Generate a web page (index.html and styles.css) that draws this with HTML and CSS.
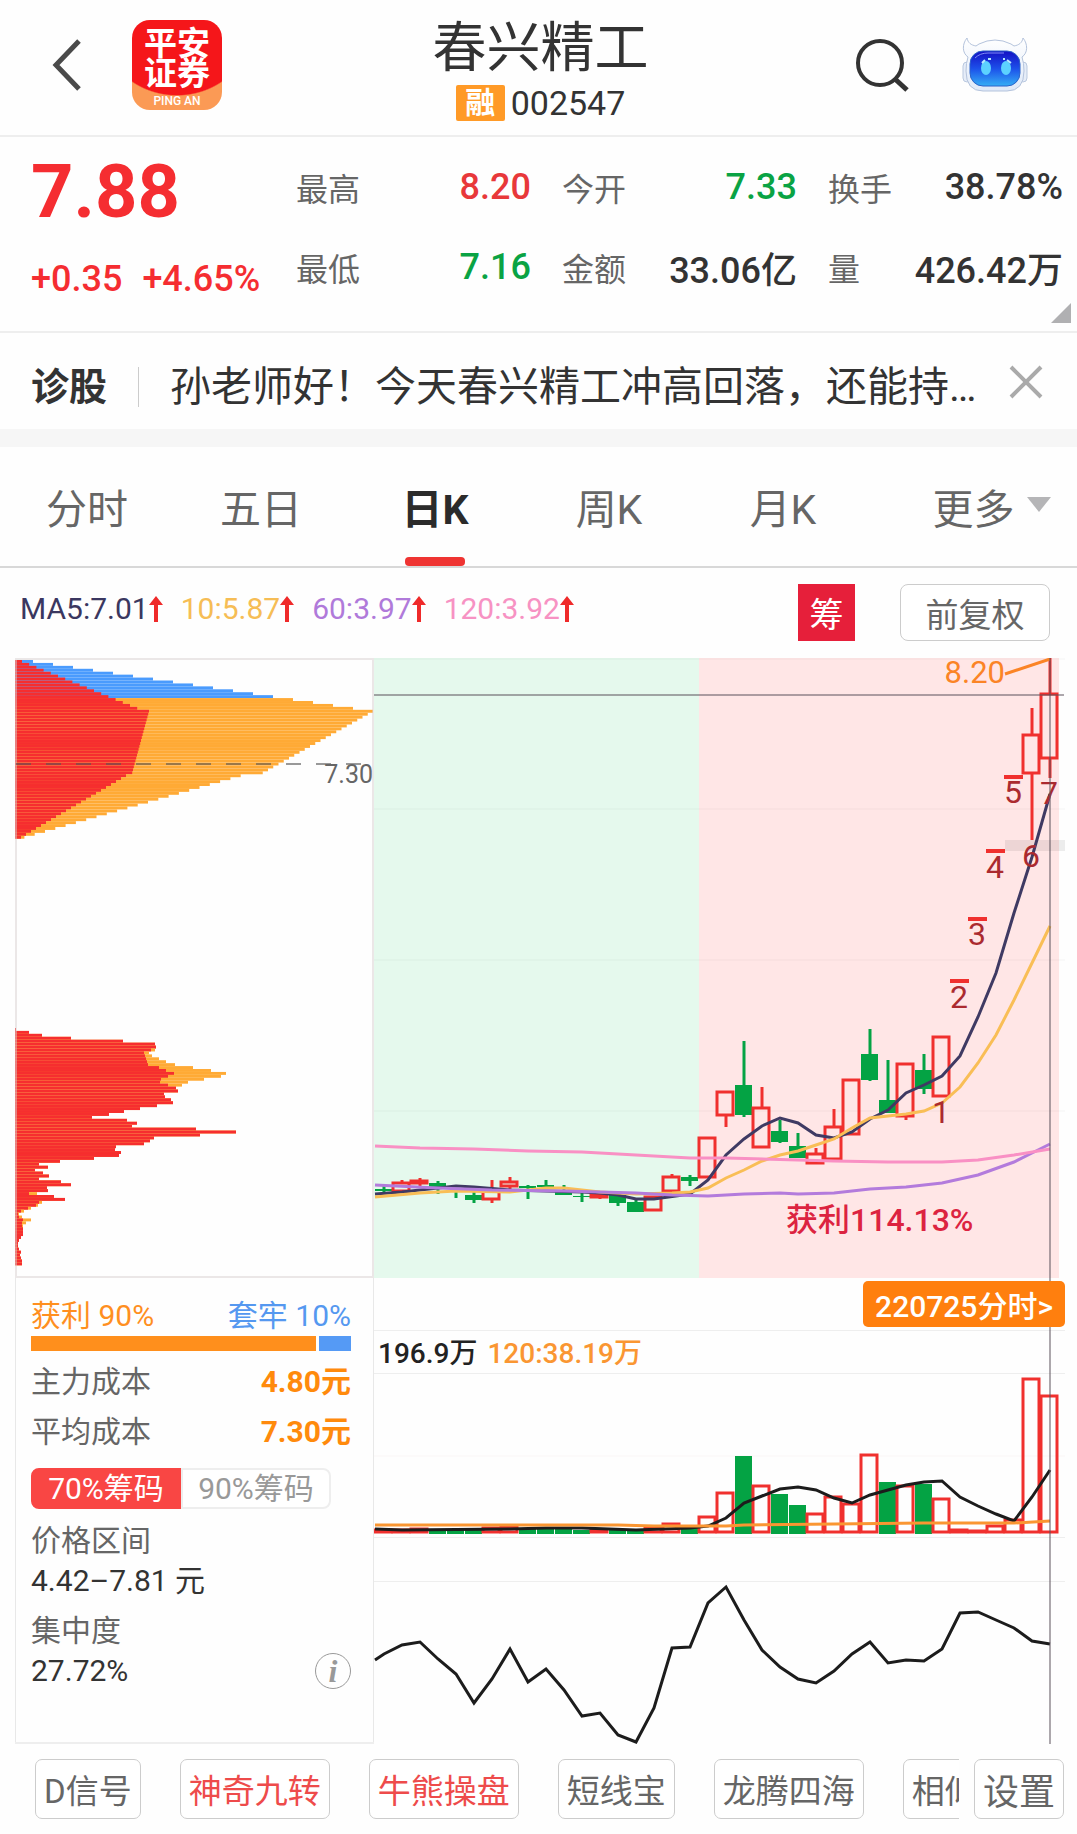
FILE: index.html
```html
<!DOCTYPE html>
<html lang="zh-CN">
<head>
  <meta charset="UTF-8">
  <meta name="viewport" content="width=device-width, initial-scale=1.0">
  <title>春兴精工 002547</title>
  <link rel="stylesheet" href="styles.css">
</head>
<body>
  <header class="header">
    <div class="header-left">
      <button class="icon-btn" type="button" aria-label="返回">
        <svg width="30" height="54" viewBox="0 0 30 54"><path d="M27 3 L4 27 L27 51" fill="none" stroke="#4a4a4a" stroke-width="5"/></svg>
      </button>
      <div class="logo">
        <span class="logo-name">平安<br>证券</span>
        <span class="logo-en">PING AN</span>
      </div>
    </div>
    <div class="header-title">
      <h1>春兴精工</h1>
      <p class="code"><span class="badge">融</span>002547</p>
    </div>
    <div class="header-right">
      <button class="icon-btn" type="button" aria-label="搜索">
        <svg width="54" height="54" viewBox="0 0 54 54"><g fill="none" stroke="#333" stroke-width="4"><circle cx="25" cy="25" r="22"/><path d="M40 41 L52 52" stroke-width="5"/></g></svg>
      </button>
      <button class="icon-btn" type="button" aria-label="智能助手">
        <svg width="68" height="56" viewBox="0 0 68 56">
          <defs>
            <linearGradient id="screen" x1="0" y1="0" x2="0" y2="1">
              <stop offset="0" stop-color="#1410c4"/>
              <stop offset="0.5" stop-color="#1c50ea"/>
              <stop offset="1" stop-color="#35aef5"/>
            </linearGradient>
            <linearGradient id="shell" x1="0" y1="0" x2="0" y2="1">
              <stop offset="0" stop-color="#ffffff"/>
              <stop offset="1" stop-color="#dfe9f8"/>
            </linearGradient>
          </defs>
          <rect x="2" y="25" width="8" height="20" rx="4" fill="#e6edf8" stroke="#b9c8df"/>
          <rect x="58" y="25" width="8" height="20" rx="4" fill="#e6edf8" stroke="#b9c8df"/>
          <path d="M6 1 C1 7 1 16 7 20 Q5 26 5 34 Q5 54 22 54 L46 54 Q63 54 63 34 Q63 26 61 20 C67 16 67 7 62 1 C61 6 58 8 53 9 L50 7 Q34 -1 18 7 L15 9 C10 8 7 6 6 1 Z" fill="url(#shell)" stroke="#b4c3dc"/>
          <rect x="9" y="14" width="50" height="35" rx="13" fill="url(#screen)" stroke="#2b63c9"/>
          <path d="M14 21 Q19 16 27 16 L43 16" fill="none" stroke="#7e8df5" stroke-width="1"/>
          <ellipse cx="25" cy="31" rx="5" ry="7" fill="#5cd2ff"/>
          <ellipse cx="45" cy="31" rx="5" ry="7" fill="#5cd2ff"/>
          <path d="M21 26 L24 23 M27 22 L30 22 M42 22 L44 22 M46 23 L50 26" stroke="#b8ecff" stroke-width="2"/>
        </svg>
      </button>
    </div>
  </header>

  <section class="quote">
    <div class="quote-main">
      <div class="price">7.88</div>
      <div class="change"><span>+0.35</span><span>+4.65%</span></div>
    </div>
    <dl class="quote-grid">
      <div><dt>最高</dt><dd class="up">8.20</dd></div>
      <div><dt>今开</dt><dd class="down">7.33</dd></div>
      <div><dt>换手</dt><dd>38.78%</dd></div>
      <div><dt>最低</dt><dd class="down">7.16</dd></div>
      <div><dt>金额</dt><dd>33.06亿</dd></div>
      <div><dt>量</dt><dd>426.42万</dd></div>
    </dl>
    <span class="corner"></span>
  </section>

  <section class="tip">
    <strong>诊股</strong>
    <a href="#" class="tip-text">孙老师好！今天春兴精工冲高回落，还能持…</a>
    <button class="icon-btn" type="button" aria-label="关闭">
      <svg width="34" height="34" viewBox="0 0 34 34"><path d="M2 2 L32 32 M32 2 L2 32" stroke="#aaa" stroke-width="4"/></svg>
    </button>
  </section>

  <nav class="tabs">
    <a href="#">分时</a>
    <a href="#">五日</a>
    <a href="#" class="active">日K</a>
    <a href="#">周K</a>
    <a href="#">月K</a>
    <a href="#" class="more">更多</a>
  </nav>

  <section class="ma-bar">
    <ul class="ma-list">
      <li class="ma5">MA5:7.01<svg class="arrow" width="14" height="26" viewBox="0 0 14 26"><path d="M7 0 L14 9 L9 9 L9 26 L5 26 L5 9 L0 9 Z"/></svg></li>
      <li class="ma10">10:5.87<svg class="arrow" width="14" height="26" viewBox="0 0 14 26"><path d="M7 0 L14 9 L9 9 L9 26 L5 26 L5 9 L0 9 Z"/></svg></li>
      <li class="ma60">60:3.97<svg class="arrow" width="14" height="26" viewBox="0 0 14 26"><path d="M7 0 L14 9 L9 9 L9 26 L5 26 L5 9 L0 9 Z"/></svg></li>
      <li class="ma120">120:3.92<svg class="arrow" width="14" height="26" viewBox="0 0 14 26"><path d="M7 0 L14 9 L9 9 L9 26 L5 26 L5 9 L0 9 Z"/></svg></li>
    </ul>
    <button class="chip-btn" type="button">筹</button>
    <button class="adjust-btn" type="button">前复权</button>
  </section>

  <main class="charts">
    <div class="chips">
      <svg id="chip-chart" viewBox="0 0 359 620"></svg>
      <div class="chip-info">
        <div class="ratio-label"><span class="profit">获利 90%</span><span class="loss">套牢 10%</span></div>
        <div class="ratio-bar"><span class="bar-profit"></span><span class="bar-loss"></span></div>
        <div class="cost"><span>主力成本</span><b>4.80元</b></div>
        <div class="cost"><span>平均成本</span><b>7.30元</b></div>
        <div class="toggle">
          <button class="on" type="button">70%筹码</button>
          <button type="button">90%筹码</button>
        </div>
        <p class="label">价格区间</p>
        <p class="value">4.42–7.81 元</p>
        <p class="label">集中度</p>
        <div class="last">
          <p class="value">27.72%</p>
          <button class="info-btn" type="button" aria-label="说明">i</button>
        </div>
      </div>
    </div>
    <div class="panes">
      <span class="crosshair"></span>
      <svg id="price-chart" viewBox="0 0 691 620"></svg>
      <div class="date-row"><button class="date-btn" type="button">220725分时&gt;</button></div>
      <div class="vol-row"><span>196.9万</span><span class="vol120">120:38.19万</span></div>
      <svg id="volume-chart" viewBox="0 0 691 163"></svg>
      <div class="indicator-row"></div>
      <svg id="indicator-chart" viewBox="0 0 691 162"></svg>
    </div>
  </main>

  <footer class="footer">
    <div class="footer-scroll">
      <button type="button">D信号</button>
      <button type="button" class="hot">神奇九转</button>
      <button type="button" class="hot">牛熊操盘</button>
      <button type="button">短线宝</button>
      <button type="button">龙腾四海</button>
      <button type="button">相似K线</button>
    </div>
    <button type="button" class="settings">设置</button>
  </footer>
  <script src="script.js"></script>
</body>
</html>
```
FILE: styles.css
```css
* {
  box-sizing: border-box;
}
body {
  margin: 0;
  background-color: #fefefe;
  color: #333;
  font-family: Roboto, "Noto Sans CJK SC", sans-serif;
}
h1, p, ul, dl, dd {
  margin: 0;
  padding: 0;
}
a {
  color: inherit;
  text-decoration: none;
}
button {
  font-family: inherit;
  cursor: pointer;
}
svg {
  display: block;
}
.icon-btn {
  padding: 0;
  border: none;
  background: none;
}

/* header */
.header {
  display: grid;
  grid-template-columns: 1fr auto 1fr;
  align-items: center;
  height: 137px;
  padding: 0 48px 0 52px;
  border-bottom: 2px solid #eee;
}
.header-left {
  display: flex;
  align-items: center;
  gap: 50px;
  padding-bottom: 6px;
}
.header-right {
  display: flex;
  align-items: center;
  justify-content: flex-end;
  gap: 52px;
  padding-bottom: 6px;
}
.logo {
  display: flex;
  flex-direction: column;
  align-items: center;
  width: 90px;
  height: 90px;
  padding-top: 9px;
  border-radius: 18px;
  background: radial-gradient(ellipse 75px 68px at 50% 8px, #f5161a 0, #f5161a 98%, #fb9a55 100%);
  color: #fff;
}
.logo-name {
  font-size: 33px;
  line-height: 30px;
  font-weight: bold;
}
.logo-en {
  margin-top: 6px;
  font-size: 12px;
  line-height: 12px;
  font-weight: 500;
}
.header-title {
  padding-top: 4px;
  text-align: center;
}
h1 {
  font-size: 54px;
  line-height: 66px;
  font-weight: normal;
}
.code {
  display: flex;
  align-items: center;
  justify-content: center;
  gap: 6px;
  height: 42px;
  font-size: 34px;
}
.badge {
  width: 49px;
  height: 36px;
  border-radius: 2px;
  background-color: #ff9a27;
  color: #fff;
  font-size: 30px;
  line-height: 35px;
  font-weight: bold;
}

/* quote */
.quote {
  position: relative;
  display: flex;
  height: 196px;
  padding: 10px 14px 0 31px;
  border-bottom: 2px solid #eee;
}
.quote-main {
  width: 265px;
  color: #f52d31;
}
.price {
  font-size: 74px;
  line-height: 90px;
  font-weight: bold;
}
.change {
  display: flex;
  gap: 20px;
  margin-top: 22px;
  font-size: 36px;
  line-height: 40px;
  font-weight: 500;
}
.quote-grid {
  flex: 1;
  display: grid;
  grid-template-columns: repeat(3, 1fr);
  grid-auto-rows: 80px;
  column-gap: 31px;
}
.quote-grid div {
  display: flex;
  align-items: center;
  justify-content: space-between;
}
dt {
  color: #666;
  font-size: 32px;
}
dd {
  font-size: 36px;
  font-weight: 500;
}
.up {
  color: #e8383a;
}
.down {
  color: #0aa344;
}
.corner {
  position: absolute;
  right: 6px;
  bottom: 8px;
  border-left: 20px solid transparent;
  border-bottom: 20px solid #b0b0b2;
}

/* diagnosis tip */
.tip {
  display: flex;
  align-items: center;
  height: 96px;
  padding: 12px 34px 0 31px;
}
.tip strong {
  padding-right: 31px;
  border-right: 1px solid #ccc;
  font-size: 38px;
  line-height: 40px;
}
.tip-text {
  flex: 1;
  padding-left: 31px;
  overflow: hidden;
  white-space: nowrap;
  font-size: 41px;
  line-height: 56px;
}
.tip .icon-btn {
  padding-bottom: 10px;
}

/* tabs */
.tabs {
  display: grid;
  grid-template-columns: repeat(5, 174fr) 207fr;
  height: 139px;
  border-top: 18px solid #f6f6f6;
  border-bottom: 2px solid #d8d8d8;
  color: #666;
}
.tabs a {
  position: relative;
  padding-top: 2px;
  font-size: 41px;
  line-height: 122px;
  text-align: center;
}
.tabs .active {
  color: #2b2b2b;
  font-weight: bold;
}
.tabs .active::after {
  content: "";
  position: absolute;
  left: 50%;
  bottom: 5px;
  width: 60px;
  height: 9px;
  margin-left: -30px;
  border-radius: 4px;
  background-color: #ef3432;
}
.tabs .more::after {
  content: "";
  position: absolute;
  right: 26px;
  top: 50px;
  border: 12px solid transparent;
  border-top: 15px solid #b5b5b7;
  border-bottom: none;
}

/* moving averages */
.ma-bar {
  display: flex;
  align-items: flex-start;
  height: 90px;
  padding: 16px 27px 0 20px;
}
.ma-list {
  flex: 1;
  display: flex;
  gap: 18px;
  list-style: none;
  font-size: 30px;
  line-height: 50px;
}
.ma-list li {
  display: flex;
  align-items: center;
}
.arrow {
  fill: #ef2a2a;
}
.ma5 {
  color: #3a3760;
}
.ma10 {
  color: #f6bd55;
}
.ma60 {
  color: #b07ada;
}
.ma120 {
  color: #f792c3;
}
.chip-btn {
  width: 57px;
  height: 57px;
  margin-right: 45px;
  padding: 0;
  border: none;
  background-color: #e61f3a;
  color: #fff;
  font-size: 34px;
}
.adjust-btn {
  width: 150px;
  height: 57px;
  padding: 0;
  border: 1px solid #ccc;
  border-radius: 8px;
  background-color: #fff;
  color: #666;
  font-size: 33px;
}

/* charts */
.charts {
  display: grid;
  grid-template-columns: 359fr 691fr;
  margin: 0 12px 0 15px;
}
.chips {
  display: flex;
  flex-direction: column;
  border-bottom: 2px solid #eee;
}
.chip-info {
  flex: 1;
  padding: 18px 22px 0 15px;
  border: 1px solid #e8e8e8;
  border-top: none;
  border-bottom: none;
  font-size: 30px;
  line-height: 40px;
}
.ratio-label, .cost, .last {
  display: flex;
  justify-content: space-between;
  align-items: center;
}
.profit {
  color: #ff8f1f;
}
.loss {
  color: #5598f0;
}
.ratio-bar {
  display: flex;
  gap: 3px;
  height: 15px;
  margin-bottom: 6px;
}
.bar-profit {
  flex: 90;
  background-color: #ff8f1c;
}
.bar-loss {
  flex: 10;
  background-color: #559af5;
}
.cost {
  height: 50px;
  color: #666;
}
.cost b {
  color: #ff8a0c;
}
.toggle {
  display: flex;
  width: 300px;
  height: 41px;
  margin: 11px 0 12px;
}
.toggle button {
  flex: 1;
  padding: 0;
  border: 2px solid #eee;
  border-radius: 0 8px 8px 0;
  background-color: #fff;
  color: #999;
  font-size: 30px;
  line-height: 36px;
}
.toggle .on {
  border-color: #f94644;
  border-radius: 8px 0 0 8px;
  background-color: #f94644;
  color: #fff;
}
.label {
  color: #666;
}
.value {
  margin-bottom: 10px;
}
.last .value {
  margin: 0;
}
.info-btn {
  width: 36px;
  height: 36px;
  padding: 0;
  border: 1px solid #999;
  border-radius: 50%;
  background: none;
  color: #999;
  font-family: "Liberation Serif", serif;
  font-size: 32px;
  font-style: italic;
  font-weight: bold;
  line-height: 30px;
}
.panes {
  position: relative;
}
.crosshair {
  position: absolute;
  top: 0;
  bottom: 0;
  left: 97.7%;
  width: 2px;
  background-color: rgba(90, 80, 90, 0.5);
}
.date-row {
  display: flex;
  justify-content: flex-end;
  height: 53px;
  padding-top: 3px;
  border-bottom: 1px solid #eee;
}
.date-btn {
  position: relative;
  height: 46px;
  padding: 0 12px;
  border: none;
  border-radius: 5px;
  background-color: #ff7f0e;
  color: #fff;
  font-size: 30px;
  font-weight: 500;
}
.vol-row {
  display: flex;
  gap: 10px;
  height: 43px;
  padding-left: 4px;
  border-bottom: 1px solid #eee;
  color: #222;
  font-size: 28px;
  line-height: 46px;
  font-weight: 500;
}
.vol120 {
  color: #fa9632;
}
.indicator-row {
  height: 45px;
  border-top: 1px solid #eee;
  border-bottom: 1px solid #eee;
}

/* footer */
.footer {
  display: flex;
  gap: 15px;
  padding: 15px 13px 15px 35px;
}
.footer button {
  flex: none;
  height: 60px;
  padding: 0 8px;
  border: 1px solid #ccc;
  border-radius: 7px;
  background-color: #fff;
  color: #666;
  font-size: 33px;
}
.footer-scroll {
  flex: 1;
  display: flex;
  gap: 39px;
  overflow: hidden;
}
.footer .hot {
  color: #ee4b4b;
}
.footer .settings {
  font-size: 36px;
}
```
FILE: script.js
```js
const RED = "#f0302e";
const GREEN = "#04a344";
const STEP = 18;
const FIRST = 10;

function add(svg, name, attrs, text) {
  const el = document.createElementNS("http://www.w3.org/2000/svg", name);
  for (const key in attrs) el.setAttribute(key, attrs[key]);
  if (text) el.textContent = text;
  svg.appendChild(el);
}

function line(svg, points, color, width = 3) {
  add(svg, "polyline", { points: points.map(p => p.join(",")).join(" "), fill: "none", stroke: color, "stroke-width": width });
}

// points given as [candle index, y]
function series(svg, points, color, width) {
  line(svg, points.map(([i, y]) => [FIRST + i * STEP, y]), color, width);
}

/* ---- chip distribution ---- */
const chip = document.getElementById("chip-chart");
const PITCH = 2.93;

function chipRow(y, profit, total, color) {
  add(chip, "rect", { x: 0, y: y, width: total, height: PITCH, fill: color });
  add(chip, "rect", { x: 0, y: y, width: profit, height: PITCH, fill: "#f62e2f" });
}

for (let i = 0; i <= 60; i++) {
  let total, profit;
  if (i <= 17) total = 18 + i * 20;
  else if (i <= 38) total = 358 - (i - 17) * 5.25;
  else total = 236 - (i - 38) * 10.3;
  if (i <= 16) profit = 7 + i * 7.2;
  else if (i <= 38) profit = 134 - (i - 17) * 0.8;
  else profit = 116 - (i - 38) * 5;
  chipRow(2 + i * PITCH, profit, total, i < 13 ? "#4a9bfd" : "#ffaa35");
}

// [profit, total] per price level, a single number when both are the same
const lower = [1, 14, 27, 56, 108, 140, 141, [136, 140], [129, 134], [130, 137], [131, 144], [132, 151],
  [133, 160], [144, 178], [151, 196], [159, 211], [153, 206], [146, 189], [145, 173], [153, 167], 161, 163,
  149, 150, 156, 158, 142, 125, 109, 94, 77, 112, 122, 117, 181, 221, 185, 139, 135, 129, 101, 100, 106, 104,
  79, 45, 24, 33, 20, 28, 34, 24, 46, 56, 32, 33, [14, 22], 39, 50, [24, 27], [21, 23], [13, 16], [6, 9],
  [3, 4], [4, 7], [8, 16], [7, 11], [7, 8], 8, 8, 8, 6, 4, 3, 3, 4, 6, 5, 6, 7, 7];
lower.forEach((row, i) => {
  const [profit, total] = Array.isArray(row) ? row : [row, row];
  chipRow(370 + i * PITCH, profit, total, "#ffaa35");
});
add(chip, "rect", { x: 1, y: 1, width: 357, height: 618, fill: "none", stroke: "#d8cfcf", "stroke-width": 2, opacity: 0.5 });
add(chip, "line", { x1: 1, y1: 106, x2: 347, y2: 106, stroke: "#555", "stroke-opacity": 0.6, "stroke-width": 2, "stroke-dasharray": "15 15" });
add(chip, "text", { x: 358, y: 125, "text-anchor": "end", "font-size": 25, fill: "#666" }, "7.30");

/* ---- candles ---- */
const price = document.getElementById("price-chart");
add(price, "rect", { x: 0, y: 0, width: 325, height: 620, fill: "#e5f9ed" });
add(price, "rect", { x: 325, y: 0, width: 360, height: 620, fill: "#ffe6e6" });
[1, 151, 302, 453].forEach(y => add(price, "line", { x1: 0, y1: y, x2: 691, y2: y, stroke: "#000", "stroke-opacity": 0.02, "stroke-width": 2 }));
add(price, "rect", { x: 631, y: 182, width: 60, height: 11, fill: "#000", "fill-opacity": 0.07 });

// [index, up, high, top, bottom, low]
const candles = [
  [0, 0, 528, 531, 533, 535], [1, 1, 522, 525, 533, 533], [2, 1, 520, 523, 525, 529], [3, 0, 523, 525, 529, 536],
  [4, 0, 532, 532, 534, 540], [5, 0, 534, 537, 542, 545], [6, 1, 522, 533, 541, 545], [7, 1, 519, 524, 528, 532],
  [8, 0, 527, 528, 530, 541], [9, 0, 522, 527, 529, 529], [10, 0, 527, 534, 537, 537], [11, 0, 534, 538, 539, 544],
  [12, 1, 535, 536, 539, 541], [13, 0, 537, 537, 545, 548], [14, 0, 541, 544, 554, 554], [15, 1, 539, 539, 552, 553],
  [16, 1, 516, 519, 533, 533], [17, 0, 517, 519, 523, 528], [18, 1, 480, 480, 519, 519], [19, 1, 434, 434, 457, 469],
  [20, 0, 383, 427, 457, 459], [21, 1, 429, 450, 489, 489], [22, 0, 462, 473, 484, 485], [23, 0, 475, 488, 500, 500],
  [24, 1, 490, 496, 505, 505], [25, 1, 451, 469, 501, 504], [26, 1, 422, 422, 476, 476], [27, 0, 371, 396, 422, 423],
  [28, 0, 402, 442, 455, 455], [29, 1, 406, 406, 458, 462], [30, 0, 396, 412, 431, 436], [31, 1, 379, 379, 438, 438],
  [36, 1, 50, 77, 115, 182], [37, 1, 0, 36, 100, 120]
];
candles.forEach(([i, up, high, top, bottom, low]) => {
  const x = FIRST + i * STEP;
  const color = up ? RED : GREEN;
  line(price, [[x, high], [x, top]], color);
  line(price, [[x, bottom], [x, low]], color);
  if (up) add(price, "rect", { x: x - 9, y: top, width: 16, height: bottom - top, fill: "none", stroke: color, "stroke-width": 3 });
  else add(price, "rect", { x: x - 9, y: top, width: 17, height: bottom - top, fill: color });
});
// limit-up days have no body
[[32, 323], [33, 261], [34, 193], [35, 119]].forEach(([i, y]) => {
  add(price, "rect", { x: FIRST + i * STEP - 10, y: y - 2, width: 19, height: 4, fill: RED });
});

series(price, [[-0.5, 536], [1, 534], [2, 532], [4, 528], [5, 529], [7, 532], [9, 533], [11, 534], [12, 535], [13, 537],
  [14, 541], [15, 541], [17, 536], [18, 522], [19, 497], [20, 481], [21, 468], [22, 460], [23, 465], [24, 477],
  [25, 480], [26, 474], [27, 461], [28, 452], [29, 435], [30, 427], [31, 418], [32, 398], [33, 359], [34, 315],
  [35, 255], [36, 199], [37, 136]], "#3f3a63");
series(price, [[-0.5, 539], [2, 535], [4, 533], [7, 534], [9, 530], [10, 530], [12, 534], [14, 536], [16, 535], [17, 534],
  [18, 530], [19, 520], [20, 512], [21, 503], [22, 497], [23, 493], [24, 487], [25, 481], [26, 470], [27, 460],
  [28, 458], [29, 456], [30, 453], [31, 445], [32, 429], [33, 405], [34, 377], [35, 342], [36, 305], [37, 268]], "#f9be56");
series(price, [[-0.5, 527], [3, 530], [6, 532], [10, 533], [14, 535], [16, 537], [18, 538], [20, 536], [22, 535], [23, 536],
  [25, 535], [27, 531], [29, 529], [31, 525], [33, 517], [35, 504], [36, 495], [37, 486]], "#b37bdc");
series(price, [[-0.5, 488], [2, 490], [5, 491], [8, 493], [11, 494], [14, 497], [17, 500], [19, 500], [23, 502], [25, 503],
  [28, 504], [31, 504], [33, 502], [35, 497], [37, 491]], "#f990c4");

[["1", 31, 465], ["2", 32, 350], ["3", 33, 287], ["4", 34, 220], ["5", 35, 145], ["6", 36, 209], ["7", 37, 146]].forEach(([n, i, y]) => {
  add(price, "text", { x: FIRST + i * STEP - 1, y: y, "text-anchor": "middle", "font-size": 32, fill: "#ab2a2f" }, n);
});
add(price, "line", { x1: 0, y1: 37, x2: 690, y2: 37, stroke: "#5a505a", "stroke-opacity": 0.5, "stroke-width": 2 });
line(price, [[631, 16], [676, 1]], "#fb8426");
add(price, "text", { x: 631, y: 25, "text-anchor": "end", "font-size": 31, fill: "#fb8426" }, "8.20");
add(price, "text", { x: 412, y: 573, "font-size": 32, "font-weight": 500, fill: "#dc2340" }, "获利114.13%");

/* ---- volume ---- */
const volume = document.getElementById("volume-chart");
const BASE = 159;
const bars = [[1, 156], [1, 156], [1, 155], [0, 155], [0, 155], [0, 155], [1, 154], [1, 153], [0, 155], [0, 155],
  [0, 155], [0, 156], [1, 156], [0, 156], [0, 157], [1, 154], [1, 150], [0, 154], [1, 143], [1, 119],
  [0, 82], [1, 112], [0, 120], [0, 131], [1, 140], [1, 123], [1, 130], [1, 81], [0, 108], [1, 112],
  [0, 110], [1, 125], [1, 156], [1, 157], [1, 152], [1, 146], [1, 5], [1, 22]];
add(volume, "line", { x1: 0, y1: 82, x2: 691, y2: 82, stroke: "#faf6f6", "stroke-width": 1 });
bars.forEach(([up, y], i) => {
  const x = FIRST + i * STEP - 9;
  if (up) add(volume, "rect", { x: x, y: y, width: 16, height: BASE - 1 - y, fill: "none", stroke: RED, "stroke-width": 3 });
  else add(volume, "rect", { x: x, y: y, width: 17, height: BASE + 1 - y, fill: GREEN });
});
series(volume, [[-0.5, 155], [1, 156], [7, 155], [9, 154], [11, 154], [14, 156], [17, 154], [18, 152], [19, 144], [20, 129],
  [21, 122], [22, 115], [23, 113], [24, 116], [25, 124], [26, 129], [27, 121], [28, 116], [29, 111], [30, 108],
  [31, 107], [32, 123], [33, 132], [34, 140], [35, 147], [36, 123], [37, 96]], "#1c1c1c");
series(volume, [[-0.5, 151], [13, 151], [15, 152], [19, 152], [20, 151], [25, 150], [30, 149], [35, 149], [37, 147]], "#fa9632");

/* ---- indicator ---- */
const indicator = document.getElementById("indicator-chart");
const values = [72, 63, 60, 77, 92, 121, 97, 67, 100, 87, 108, 134, 131, 153, 160, 126, 66, 65, 21, 5, 38, 68, 85, 97, 101,
  89, 72, 60, 81, 78, 79, 67, 31, 30, 38, 46, 59, 62];
series(indicator, [[-0.5, 78]].concat(values.map((v, i) => [i, v])), "#1c1c1c");
```
